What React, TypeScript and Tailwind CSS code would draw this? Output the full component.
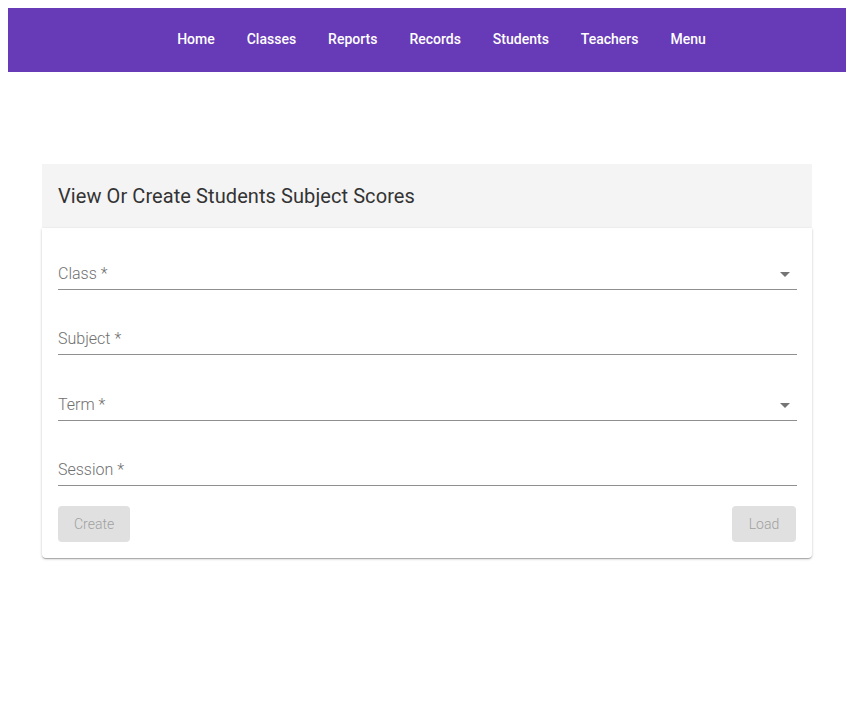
import React from "react";

const navItems = ["Home", "Classes", "Reports", "Records", "Students", "Teachers", "Menu"];

function Arrow() {
  return (
    <svg width="24" height="24" viewBox="0 0 24 24" className="absolute right-[0px] bottom-[3px]">
      <path d="M7 10l5 5 5-5z" fill="#757575" />
    </svg>
  );
}

function Field({ label, select, mt }: { label: string; select?: boolean; mt: string }) {
  return (
    <div className={`${mt} relative h-[46px] border-b border-[#8f8f8f] flex items-end pb-[6px]`}>
      <span className="text-[16px] leading-[19px] font-light text-[#707070]">{label} *</span>
      {select && <Arrow />}
    </div>
  );
}

export default function App() {
  return (
    <div className="p-2 bg-white min-h-[715px]" style={{ fontFamily: "Roboto, 'Noto Sans', sans-serif" }}>
      <nav className="h-16 bg-[#673ab7] flex items-center justify-center gap-8 pl-[29px] pb-[2px]">
        {navItems.map((n) => (
          <span key={n} className="text-white text-[14px] font-medium">{n}</span>
        ))}
      </nav>
      <div className="px-[34px] pt-[92px]">
        <div className="h-16 bg-[#f4f4f4] flex items-center px-4">
          <h1 className="text-[20px] text-[#333333] tracking-[0.08px]">View Or Create Students Subject Scores</h1>
        </div>
        <div className="flex flex-col bg-white rounded-b shadow-[0_1px_3px_0_rgba(0,0,0,0.2),0_1px_1px_0_rgba(0,0,0,0.14),0_2px_1px_-1px_rgba(0,0,0,0.12)] pl-4 pr-[15px] pb-4">
          <Field label="Class" select mt="mt-4" />
          <Field label="Subject" mt="mt-[19px]" />
          <Field label="Term" select mt="mt-5" />
          <Field label="Session" mt="mt-[19px]" />
          <div className="mt-5 flex justify-between pr-px">
            <button className="h-9 px-4 min-w-16 rounded bg-[#e0e0e0] text-[14px] font-light text-[#a0a0a0]">Create</button>
            <button className="h-9 px-4 min-w-16 rounded bg-[#e0e0e0] text-[14px] font-light text-[#a0a0a0]">Load</button>
          </div>
        </div>
      </div>
    </div>
  );
}
